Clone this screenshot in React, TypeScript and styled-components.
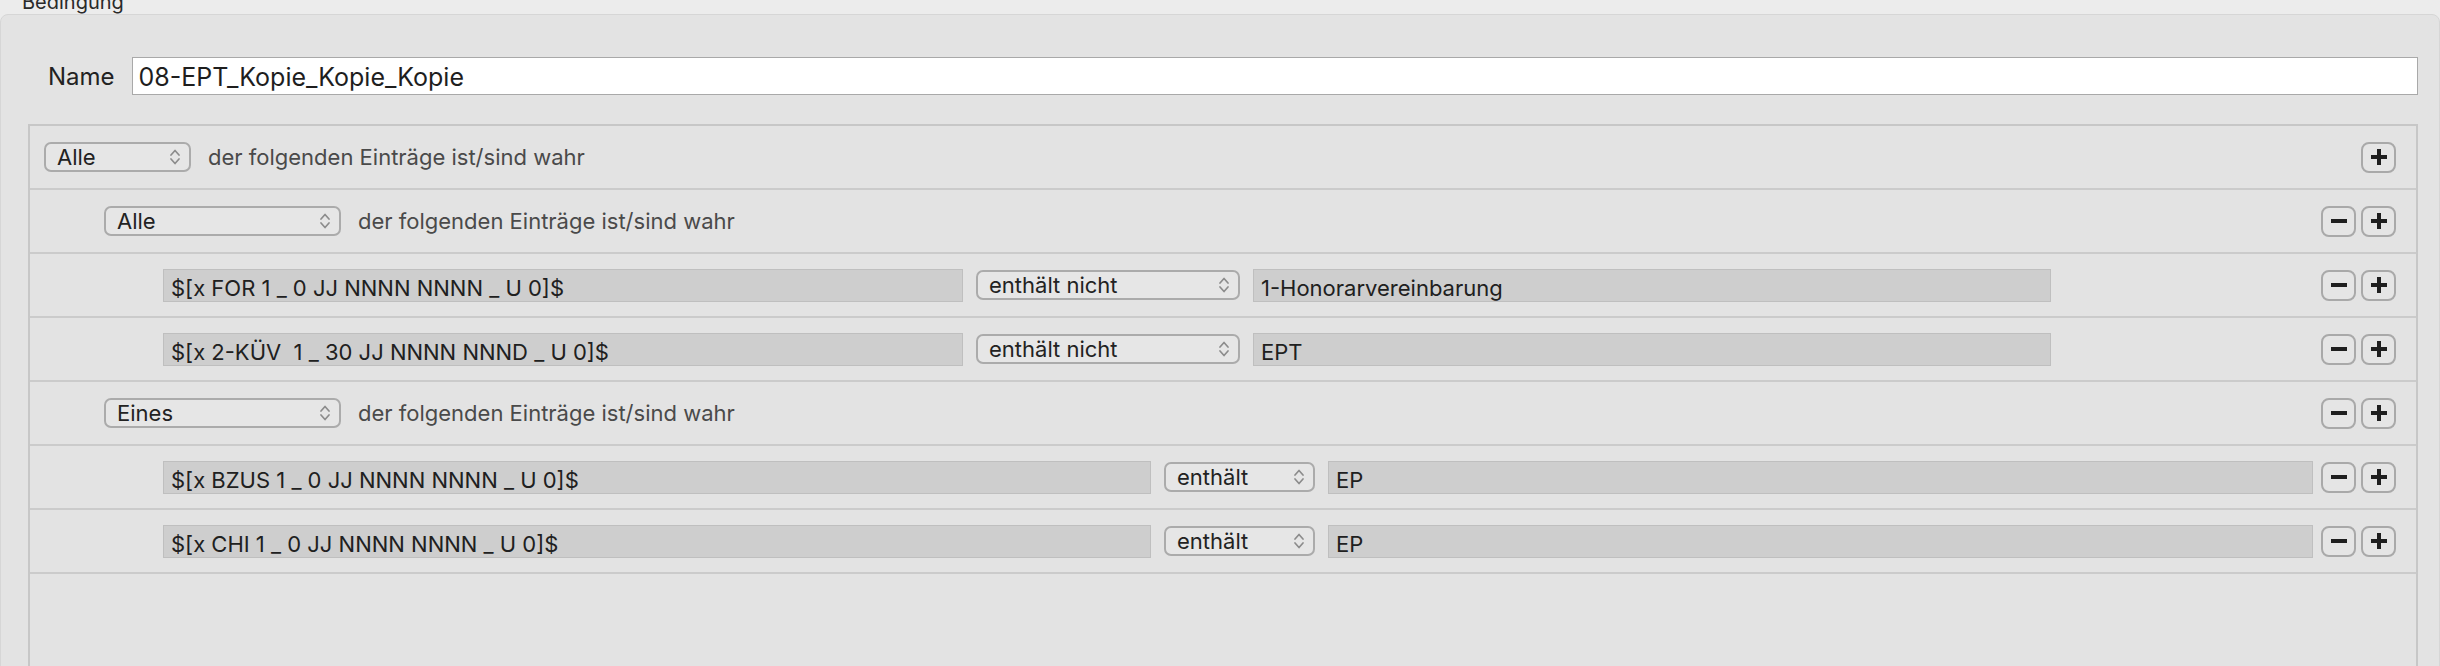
import React from "react";
import styled, { createGlobalStyle } from "styled-components";

const GlobalStyle = createGlobalStyle`
  html, body {
    margin: 0;
    padding: 0;
    background: #ececec;
    font-family: Inter, "Open Sans", sans-serif;
    overflow: hidden;
  }
`;

const Page = styled.div`
  height: 666px;
  overflow: hidden;
`;

const GroupTitle = styled.div`
  margin-top: -10px;
  height: 24px;
  padding-left: 22px;
  font-size: 20px;
  line-height: 24px;
  color: #2a2a2a;
`;

const GroupBox = styled.div`
  height: 700px;
  border: 1px solid #d6d6d6;
  border-radius: 8px;
  background: #e3e3e3;
  padding: 42px 21px 0 27px;
`;

const NameRow = styled.div`
  display: flex;
  align-items: center;
  gap: 17px;
  padding-left: 20px;
`;

const NameLabel = styled.label`
  font-size: 24px;
  color: #222;
`;

const NameInput = styled.div`
  flex: 1;
  height: 38px;
  box-sizing: border-box;
  border: 1px solid #a9a9a9;
  background: #fff;
  padding: 1px 6px 0;
  font-size: 25px;
  line-height: 36px;
  color: #1e1e1e;
`;

const RuleBox = styled.div`
  margin-top: 29px;
  height: 600px;
  border: 2px solid #c7c7c7;
  background: #e3e3e3;
`;

const Row = styled.div<{ $indent: number }>`
  display: flex;
  align-items: center;
  height: 62px;
  border-bottom: 2px solid #cbcbcb;
  padding: 0 20px 0 ${(p) => p.$indent}px;
`;

const Popup = styled.div<{ $w: number }>`
  width: ${(p) => p.$w}px;
  height: 30px;
  box-sizing: border-box;
  border: 2px solid #ababab;
  border-radius: 7px;
  background: #e6e6e6;
  display: flex;
  align-items: center;
  justify-content: space-between;
  padding: 0 8px 0 11px;
  font-size: 22px;
  color: #222;
`;

const GroupText = styled.span`
  margin-left: 17px;
  font-size: 22px;
  color: #4a4a4a;
`;

const Field = styled.div<{ $w: number }>`
  width: ${(p) => p.$w}px;
  height: 33px;
  box-sizing: border-box;
  border: 1px solid #bfbfbf;
  background: #cecece;
  padding: 4px 7px 0;
  font-size: 22px;
  line-height: 28px;
  color: #202020;
  white-space: pre;
  overflow: hidden;
`;

const CondRow = styled.div`
  display: flex;
  align-items: center;
  gap: 13px;
`;

const Buttons = styled.div`
  margin-left: auto;
  display: flex;
  gap: 5px;
`;

const SquareButton = styled.button`
  width: 35px;
  height: 31px;
  box-sizing: border-box;
  border: 2px solid #a9a9a9;
  border-radius: 8px;
  background: #e5e5e5;
  padding: 0;
  display: flex;
  align-items: center;
  justify-content: center;
`;

const Chevrons = () => (
  <svg width="12" height="20" viewBox="0 0 12 20">
    <path d="M2 8 L6 3.5 L10 8" fill="none" stroke="#8c8c8c" strokeWidth="1.7" strokeLinecap="round" strokeLinejoin="round" />
    <path d="M2 12 L6 16.5 L10 12" fill="none" stroke="#8c8c8c" strokeWidth="1.7" strokeLinecap="round" strokeLinejoin="round" />
  </svg>
);

const PlusIcon = () => (
  <svg width="16" height="16" viewBox="0 0 16 16">
    <rect x="0" y="6" width="16" height="4" fill="#1f1f1f" />
    <rect x="6" y="0" width="4" height="16" fill="#1f1f1f" />
  </svg>
);

const MinusIcon = () => (
  <svg width="16" height="16" viewBox="0 0 16 16">
    <rect x="0" y="6" width="16" height="4" fill="#1f1f1f" />
  </svg>
);

type GroupRule = { kind: "group"; indent: number; mode: string; w: number; removable: boolean };
type CondRule = {
  kind: "cond";
  field: string;
  fieldW: number;
  op: string;
  opW: number;
  value: string;
  valueW: number;
};

const rules: (GroupRule | CondRule)[] = [
  { kind: "group", indent: 14, mode: "Alle", w: 147, removable: false },
  { kind: "group", indent: 74, mode: "Alle", w: 237, removable: true },
  {
    kind: "cond",
    field: "$[x FOR 1 _ 0 JJ NNNN NNNN _ U 0]$",
    fieldW: 800,
    op: "enthält nicht",
    opW: 264,
    value: "1-Honorarvereinbarung",
    valueW: 798,
  },
  {
    kind: "cond",
    field: "$[x 2-KÜV  1 _ 30 JJ NNNN NNND _ U 0]$",
    fieldW: 800,
    op: "enthält nicht",
    opW: 264,
    value: "EPT",
    valueW: 798,
  },
  { kind: "group", indent: 74, mode: "Eines", w: 237, removable: true },
  {
    kind: "cond",
    field: "$[x BZUS 1 _ 0 JJ NNNN NNNN _ U 0]$",
    fieldW: 988,
    op: "enthält",
    opW: 151,
    value: "EP",
    valueW: 985,
  },
  {
    kind: "cond",
    field: "$[x CHI 1 _ 0 JJ NNNN NNNN _ U 0]$",
    fieldW: 988,
    op: "enthält",
    opW: 151,
    value: "EP",
    valueW: 985,
  },
];

export default function App() {
  return (
    <>
      <GlobalStyle />
      <Page>
        <GroupTitle>Bedingung</GroupTitle>
        <GroupBox>
          <NameRow>
            <NameLabel>Name</NameLabel>
            <NameInput>08-EPT_Kopie_Kopie_Kopie</NameInput>
          </NameRow>
          <RuleBox>
            {rules.map((r, i) =>
              r.kind === "group" ? (
                <Row key={i} $indent={r.indent}>
                  <Popup $w={r.w}>
                    {r.mode}
                    <Chevrons />
                  </Popup>
                  <GroupText>der folgenden Einträge ist/sind wahr</GroupText>
                  <Buttons>
                    {r.removable && (
                      <SquareButton>
                        <MinusIcon />
                      </SquareButton>
                    )}
                    <SquareButton>
                      <PlusIcon />
                    </SquareButton>
                  </Buttons>
                </Row>
              ) : (
                <Row key={i} $indent={133}>
                  <CondRow>
                    <Field $w={r.fieldW}>{r.field}</Field>
                    <Popup $w={r.opW}>
                      {r.op}
                      <Chevrons />
                    </Popup>
                    <Field $w={r.valueW}>{r.value}</Field>
                  </CondRow>
                  <Buttons>
                    <SquareButton>
                      <MinusIcon />
                    </SquareButton>
                    <SquareButton>
                      <PlusIcon />
                    </SquareButton>
                  </Buttons>
                </Row>
              )
            )}
          </RuleBox>
        </GroupBox>
      </Page>
    </>
  );
}
